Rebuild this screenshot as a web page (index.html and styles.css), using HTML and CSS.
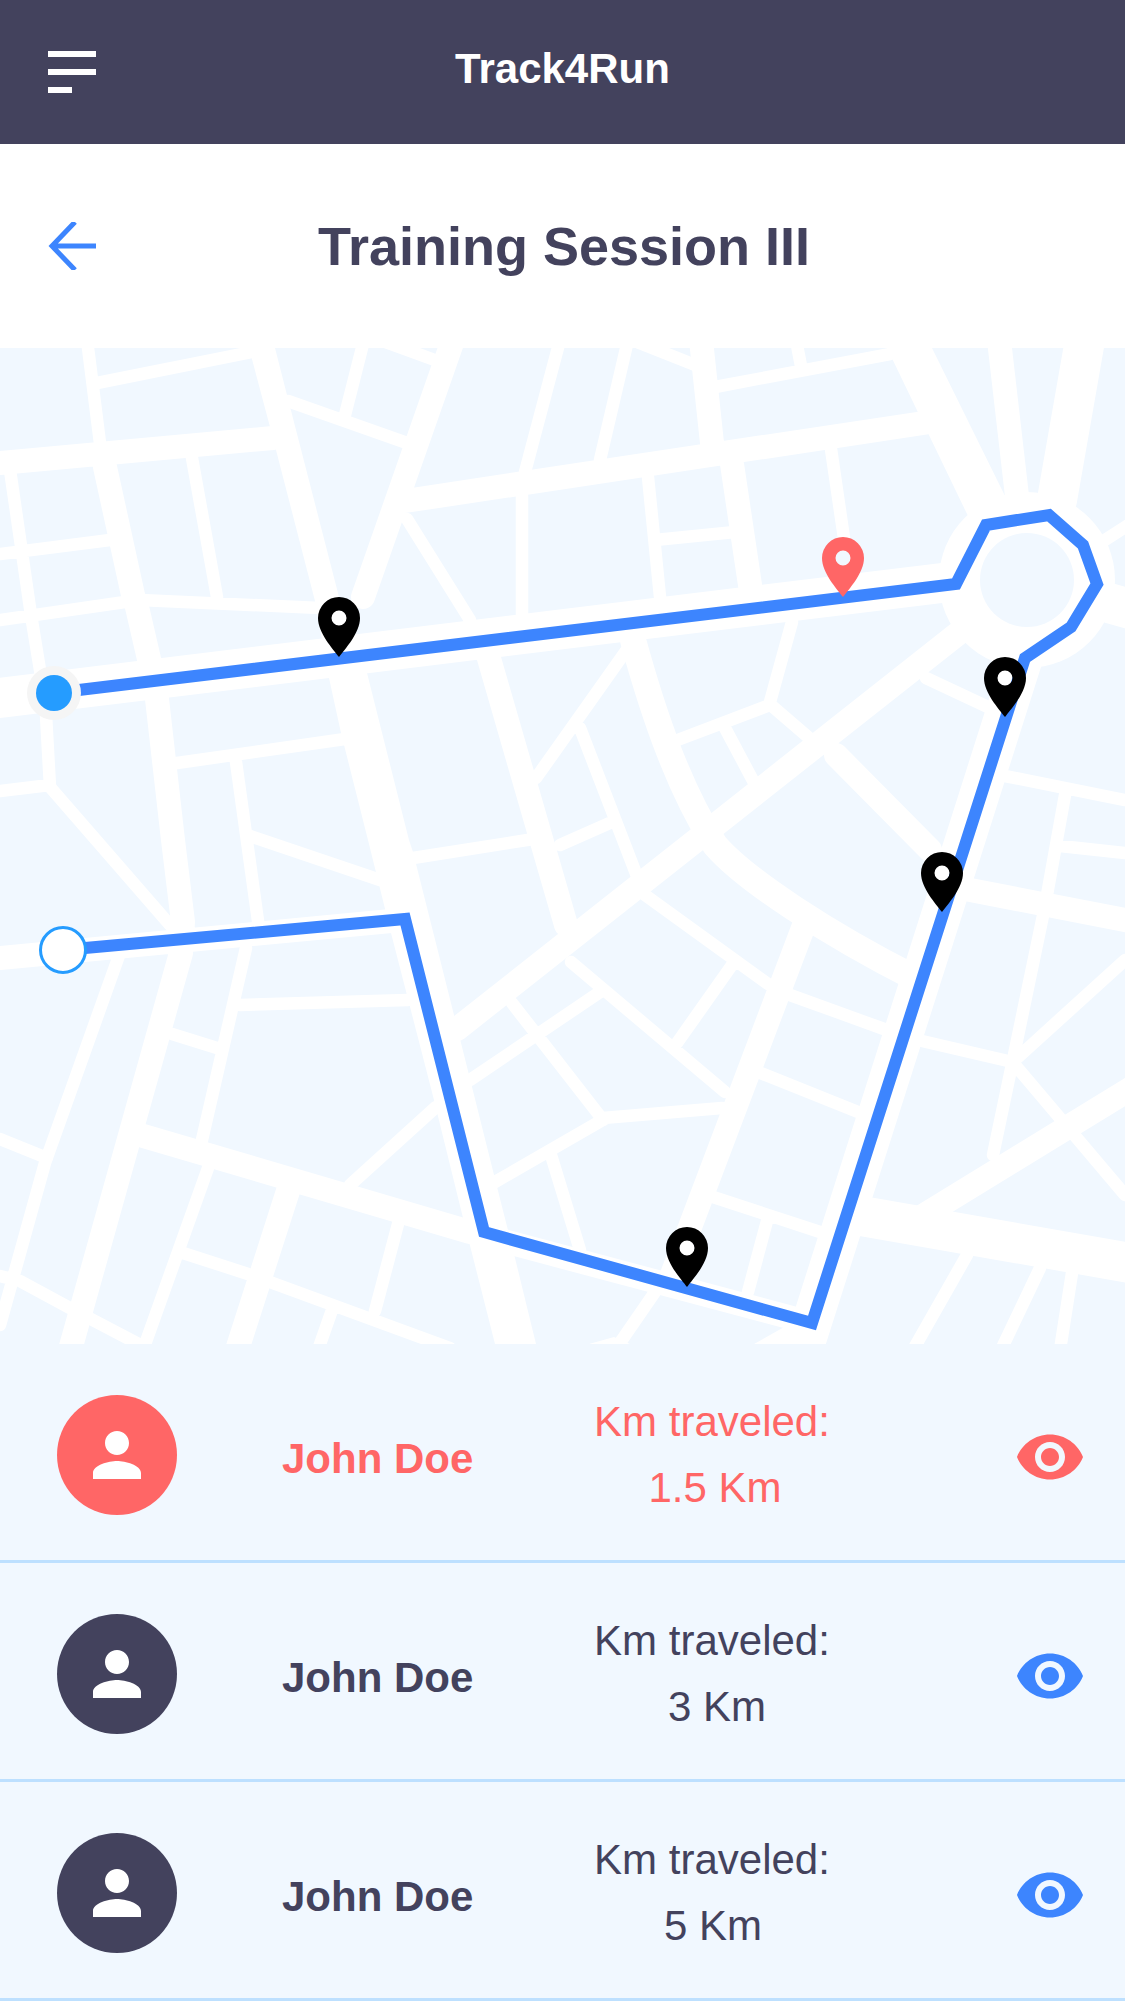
FILE: index.html
```html
<!DOCTYPE html>
<html lang="en">
<head>
<meta charset="utf-8">
<title>Track4Run</title>
<link rel="stylesheet" href="styles.css">
</head>
<body>
<svg class="defs" width="0" height="0" aria-hidden="true">
  <symbol id="pin" viewBox="0 0 42 60">
    <path fill-rule="evenodd" d="M21 60C15 52 0 36 0 21A21 21 0 0 1 42 21C42 36 27 52 21 60ZM21 13.5A7.5 7.5 0 1 0 21 28.5A7.5 7.5 0 1 0 21 13.5Z"/>
  </symbol>
  <symbol id="person" viewBox="0 0 24 24">
    <path d="M12 12c2.21 0 4-1.79 4-4s-1.79-4-4-4-4 1.79-4 4 1.79 4 4 4zm0 2c-2.67 0-8 1.34-8 4v2h16v-2c0-2.66-5.33-4-8-4z"/>
  </symbol>
  <symbol id="eye" viewBox="0 0 24 24">
    <path d="M12 4.5C7 4.5 2.73 7.61 1 12c1.73 4.39 6 7.5 11 7.5s9.27-3.11 11-7.5c-1.73-4.39-6-7.5-11-7.5zM12 17c-2.76 0-5-2.24-5-5s2.24-5 5-5 5 2.24 5 5-2.24 5-5 5zm0-8c-1.66 0-3 1.34-3 3s1.34 3 3 3 3-1.34 3-3-1.34-3-3-3z"/>
  </symbol>
</svg>

<header class="topbar">
  <div class="menu"><span class="menu-bar"></span><span class="menu-bar"></span><span class="menu-bar menu-bar--short"></span></div>
  <div class="brand">Track4Run</div>
</header>

<section class="subhead">
  <svg class="back" viewBox="0 0 48 48"><path d="M48 24H4M27 0L4 24L27 48"/></svg>
  <h1 class="title">Training Session III</h1>
</section>

<svg class="map" viewBox="0 348 1125 996">
  <rect class="block" x="0" y="348" width="1125" height="996"/>
  <path class="road road-thin" d="M87 340L100 443M97 383L262 350M236 762L258 921M246 948L202 1140M172 1034L217 1048M240 1005L408 1000M121 950L45 1163L0 1325M0 1139L47 1158M183 1253L248 1274L450 1348M398 1224L375 1311M332 1310L318 1350M208 1168L143 1350M0 1276L20 1281L68 1307L150 1350M350 1185L436 1107M10 470L31 615L40 670L46 715L50 787M0 791L50 785M50 787L170 925M0 554L110 540M0 620L125 602M140 600L320 608M192 458L217 597M170 764L345 739M250 836L380 880M413 858L540 838M288 401L407 443M364 340L345 415M380 340L440 362M560 340L525 472M522 497L522 614M407 519L470 620M536 778L628 648M580 728L640 884M612 822L560 845M792 622L770 702M770 705L675 741M772 706L815 743M725 728L758 790M926 678L990 708M470 1080L600 992M571 962L725 1092M512 1003L603 1120M603 1118L722 1108M495 1182L606 1118M551 1155L580 1250M645 895L768 984M732 965L677 1043M790 995L884 1029M758 1072L858 1112M710 1196L820 1232M767 1221L748 1292M1000 775L1125 800M1060 846L1125 853M1065 795L1045 906L1015 1050L993 1155M922 1041L1008 1061M1015 1060L1125 960M1015 1065L1125 1195M967 1255L913 1350M1040 1268L1001 1350M1072 1273L1060 1350M628 340L600 460M632 340L695 365M648 477L660 597M655 540L735 532M831 449L845 545M715 387L890 354M796 340L801 366M1105 540L1130 524M655 1292L615 1350"/>
  <path class="road road-mid" d="M0 463L273 438M105 467L133 595L137 607L149 659L157 699L173 840L183 922L181 953L70 1350M405 501L930 422M453 340L363 597M701 340L712 443M732 464L750 585M140 1135L470 1232L800 1320M0 958L391 921M488 655L566 925M960 888L1130 921M806 920L670 1280M288 1191L237 1350M836 755L930 850M900 1230L1130 1089M965 628L457 1029M999 340L1017 496"/>
  <path class="road road-curve" d="M633 640C655 720 680 790 715 845C745 880 830 935 915 978"/>
  <path class="road road-wide" d="M0 698L950 582M1035 620L803 1350M850 1214L1130 1263M1085 340L1057 500M1027 580L1130 609"/>
  <path class="road-fill" d="M249 348L270 427L276 450L315 601L329 678L341 733L368 840L391 933L434 1100L463 1218L495 1344L536 1344L515 1258L494 1175L454 1015L413 852L409 840L367 673L339 597L287 395L275 348ZM887 348L932 348L1005 496L968 516ZM754 1344L786 1326L826 1326L826 1344ZM589 1344L614 1337L630 1344Z"/>
  <circle class="ring" cx="1027" cy="580" r="88"/>
  <circle class="block" cx="1027" cy="580" r="47"/>
  <path class="route" d="M54 693L956 584L986 525L1049 515L1083 545L1097 584L1071 627L1025 658L812 1323L484 1232L405 919L63 950"/>
  <circle class="start-halo" cx="54" cy="693" r="27"/>
  <circle class="start-dot" cx="54" cy="693" r="18"/>
  <circle class="end-dot" cx="63" cy="950" r="22.5"/>
  <use class="pin" href="#pin" x="318" y="597" width="42" height="60"/>
  <use class="pin pin--red" href="#pin" x="822" y="537" width="42" height="60"/>
  <use class="pin" href="#pin" x="984" y="657" width="42" height="60"/>
  <use class="pin" href="#pin" x="921" y="852" width="42" height="60"/>
  <use class="pin" href="#pin" x="666" y="1227" width="42" height="60"/>
</svg>

<ul class="list">
  <li class="row row--active">
    <div class="avatar"><svg class="icon72"><use href="#person"/></svg></div>
    <div class="name">John Doe</div>
    <div class="stat"><div>Km traveled:</div><div class="stat-value stat-value--a">1.5 Km</div></div>
    <svg class="icon72 eye"><use href="#eye"/></svg>
  </li>
  <li class="row">
    <div class="avatar"><svg class="icon72"><use href="#person"/></svg></div>
    <div class="name">John Doe</div>
    <div class="stat"><div>Km traveled:</div><div class="stat-value stat-value--b">3 Km</div></div>
    <svg class="icon72 eye"><use href="#eye"/></svg>
  </li>
  <li class="row">
    <div class="avatar"><svg class="icon72"><use href="#person"/></svg></div>
    <div class="name">John Doe</div>
    <div class="stat"><div>Km traveled:</div><div class="stat-value">5 Km</div></div>
    <svg class="icon72 eye"><use href="#eye"/></svg>
  </li>
</ul>
</body>
</html>
```
FILE: styles.css
```css
* { box-sizing: border-box; }
html, body { margin: 0; padding: 0; background: #fff; }
body { width: 1125px; height: 2001px; overflow: hidden; font-family: "Liberation Sans", Arial, sans-serif; color: #43425d; }
.defs { position: absolute; }

.topbar { height: 144px; background: #43425d; display: grid; grid-template-columns: 1fr auto 1fr; align-items: center; padding: 0 48px; }
.menu { display: flex; flex-direction: column; gap: 12px; }
.menu-bar { display: block; width: 48px; height: 6px; background: #fff; }
.menu-bar--short { width: 24px; }
.brand { color: #fff; font-size: 42px; font-weight: 700; padding-bottom: 6px; }

.subhead { height: 204px; display: grid; grid-template-columns: 1fr auto 1fr; align-items: center; padding: 0 48px; }
.back { width: 48px; height: 48px; fill: none; stroke: #3d85fe; stroke-width: 5; }
.title { margin: 0; padding-left: 3px; font-size: 54px; font-weight: 700; color: #43425d; }

.map { display: block; width: 1125px; height: 996px; }
.block { fill: #f1f8ff; }
.road { fill: none; stroke: #fff; stroke-linecap: round; stroke-linejoin: round; }
.road-thin { stroke-width: 12.5; }
.road-mid { stroke-width: 24; }
.road-curve { stroke-width: 26; }
.road-wide { stroke-width: 40; }
.road-fill, .ring { fill: #fff; }
.route { fill: none; stroke: #3d85fe; stroke-width: 12; stroke-linejoin: miter; }
.start-halo { fill: #f5f5f5; }
.start-dot { fill: #259cff; }
.end-dot { fill: #fff; stroke: #259cff; stroke-width: 3; }
.pin { fill: #000; }
.pin--red { fill: #ff6666; }

.list { list-style: none; margin: 0; padding: 0; background: #f1f8ff; }
.row { display: grid; grid-template-columns: 225px 280px 300px 1fr; grid-template-rows: 120px; align-items: center; height: 219px; padding: 51px 39px 45px 57px; border-bottom: 3px solid #bde0ff; }
.avatar { width: 120px; height: 120px; border-radius: 50%; background: #43425d; display: flex; align-items: center; justify-content: center; fill: #fff; }
.icon72 { display: block; width: 72px; height: 72px; }
.name { font-size: 42px; font-weight: 700; padding-top: 7px; }
.stat { font-size: 42px; line-height: 66px; text-align: center; }
.stat-value { padding-left: 2px; }
.stat-value--a { padding-left: 6px; }
.stat-value--b { padding-left: 10px; }
.eye { justify-self: end; margin-top: 3px; fill: #3d85fe; }
.row--active { color: #ff6666; }
.row--active .avatar { background: #ff6666; }
.row--active .eye { fill: #ff6666; }
```
